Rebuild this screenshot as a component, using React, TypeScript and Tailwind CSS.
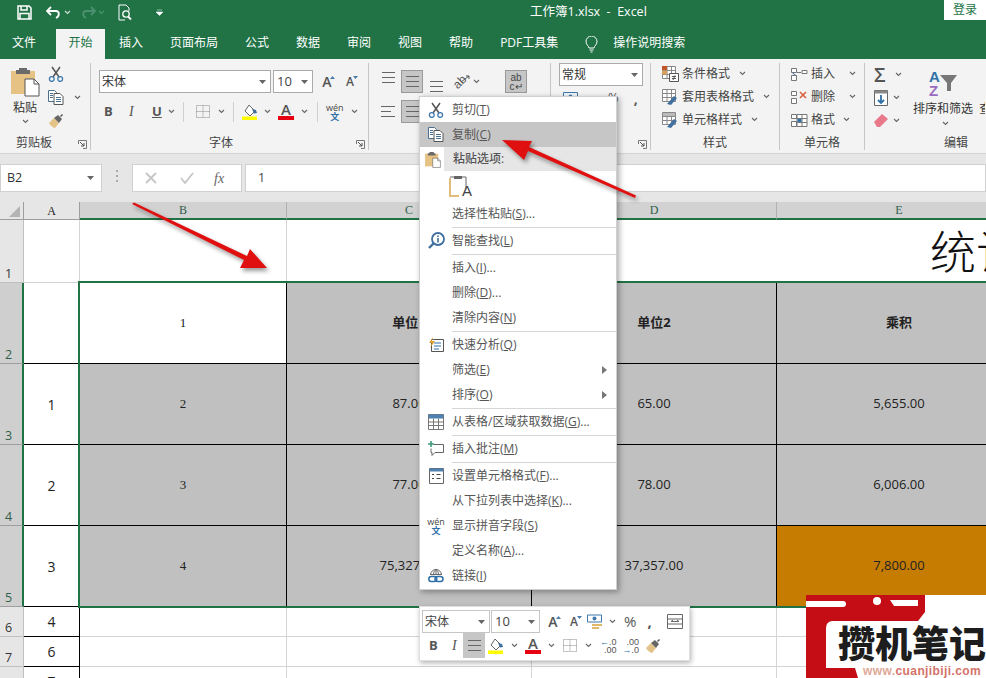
import type { ReactNode } from "react";

function Chev({ className = "", color = "#666" }: { className?: string; color?: string }) {
  return (
    <svg width="7" height="5" viewBox="0 0 7 5" className={`shrink-0 ${className}`}>
      <path d="M1 1l2.5 2.5L6 1" fill="none" stroke={color} strokeWidth="1.1" />
    </svg>
  );
}

function Caret() {
  return (
    <svg width="7" height="4" viewBox="0 0 7 4" className="shrink-0">
      <path d="M0 0h7L3.5 4z" fill="#666" />
    </svg>
  );
}

function Launcher() {
  return (
    <svg width="9" height="9" viewBox="0 0 9 9" className="absolute right-[3px] bottom-[1px]">
      <path d="M.5 4V.5H8.5V8.5H5" fill="none" stroke="#777" />
      <path d="M2 2l4 4M6 3v3H3" fill="none" stroke="#555" />
    </svg>
  );
}

function Lines({ kind = "center", className = "" }: { kind?: "center" | "left"; className?: string }) {
  return (
    <svg width="15" height="11" viewBox="0 0 15 11" className={className}>
      <path d={kind === "left" ? "M0 .5h14M0 5.5h10M0 10.5h14" : "M1 .5h13M1 5.5h13M1 10.5h13"} stroke="#666" fill="none" />
    </svg>
  );
}

function Scissors({ size = 16 }: { size?: number }) {
  return (
    <svg width={size} height={size} viewBox="0 0 16 16">
      <path d="M4 1l7 10M12 1L5 11" stroke="#555" strokeWidth="1.5" fill="none" />
      <circle cx="3.8" cy="13" r="2.4" fill="none" stroke="#3f78ac" strokeWidth="1.3" />
      <circle cx="12.2" cy="13" r="2.4" fill="none" stroke="#3f78ac" strokeWidth="1.3" />
    </svg>
  );
}

function CopyIcon() {
  return (
    <svg width="16" height="15" viewBox="0 0 16 15">
      <path d="M.5.5h6l2 2v9H.5z" fill="#fff" stroke="#4a6f8f" />
      <path d="M6 3.5h6l3 3v8H6z" fill="#fff" stroke="#555" />
      <path d="M2 3.5h3M2 5.5h3M2 7.5h3M8 7.5h5M8 9.5h5M8 11.5h5" stroke="#4a6f8f" />
    </svg>
  );
}

function PasteIcon({ large = false }: { large?: boolean }) {
  return (
    <svg width={large ? 29 : 16} height={large ? 31 : 17} viewBox="0 0 29 31">
      <path d="M0 5h24v23H0z" fill="#e6c285" />
      <path d="M8 2h8v2h3v4H5V4h3z" fill="#6b6b6b" />
      <path d="M14 13h9l5 5v12H14z" fill="#fff" stroke="#555" />
      <path d="M23 13v5h5" fill="none" stroke="#555" />
    </svg>
  );
}

function Brush({ size = 16 }: { size?: number }) {
  return (
    <svg width={size} height={size} viewBox="0 0 16 16">
      <path d="M1 10l5-5 5 5-4 5c-2-.4-5-2.6-6-5z" fill="#e4c389" />
      <path d="M6 5l4-3 4 4-3 4z" fill="#666" />
      <path d="M12 3l2-2 1 1-2 2z" fill="#555" />
    </svg>
  );
}

function DottedGrid() {
  return (
    <svg width="14" height="13" viewBox="0 0 14 13">
      <path d="M.5.5h13v12H.5zM7 .5v12M.5 6.5h13" fill="none" stroke="#888" strokeDasharray="1 1" />
    </svg>
  );
}

function Bucket() {
  return (
    <svg width="17" height="16" viewBox="0 0 17 16">
      <path d="M7 1l6 6-5 5-5-5z" fill="#fff" stroke="#666" />
      <path d="M10 5l4 1 1 3-3 .5z" fill="#3f6f9f" />
      <path d="M0 12.500h15V16H0z" fill="#ffff00" />
    </svg>
  );
}

function ColorA() {
  return (
    <span className="flex w-[16px] flex-col items-center leading-none">
      <span className="text-[15px] font-semibold leading-[12px] text-[#555]">A</span>
      <span className="mt-[1px] h-[4px] w-[16px] bg-[#e60012]" />
    </span>
  );
}

function Wen() {
  return (
    <span className="flex flex-col items-center text-[9px] leading-none">
      <span className="leading-[9px] text-[#444]">wén</span>
      <span className="font-semibold leading-[9px] text-[#2f70a8]">文</span>
    </span>
  );
}

function GrowA({ up = true }: { up?: boolean }) {
  return (
    <span className="relative flex w-[16px] justify-center">
      <span className={`${up ? "text-[14px]" : "text-[12px]"} font-semibold leading-[16px] text-[#555]`}>A</span>
      <svg width="5" height="3" viewBox="0 0 5 3" className="absolute right-0 top-[2px]">
        <path d={up ? "M0 3h5L2.500 0z" : "M0 0h5L2.500 3z"} fill="#4a7aa8" />
      </svg>
    </span>
  );
}

function TableIcon({ kind }: { kind: "cond" | "table" | "style" }) {
  return (
    <svg width="17" height="16" viewBox="0 0 17 16">
      <path d="M.5.500h13v12H.5zM.5 4.500h13M.5 8.500h13M5 .5v12M9.500.5v12" fill="#fff" stroke="#888" />
      {kind === "cond" && <path d="M0 0h5v4H0z" fill="#c0562a" />}
      {kind === "cond" && <path d="M0 4.500h5v4H0z" fill="#d8a05c" />}
      {kind === "cond" && <path d="M7.500 7.500h9v8h-9z" fill="#fff" stroke="#555" />}
      {kind === "cond" && <path d="M10 10.500h4M10 12.500h4M13 9.500l-2 4.500" stroke="#555" fill="none" />}
      {kind !== "cond" && <path d="M5 15l7-8 3 2-6 7z" fill="#40709f" />}
      {kind === "style" && <path d="M1 1h12v3H1z" fill="#bbb" />}
    </svg>
  );
}

function CellsIcon({ kind }: { kind: "ins" | "del" | "fmt" }) {
  return (
    <svg width="17" height="16" viewBox="0 0 17 16">
      <path d="M.5 2.500h5v4h-5zM.5 9.500h5v5h-5z" fill="#fff" stroke="#777" />
      {kind === "ins" && <path d="M6 6.500h4M11 4.500h5v3h-5z" fill="#fff" stroke="#777" />}
      {kind === "ins" && <path d="M1.500 7l3 2" stroke="#3f78ac" />}
      {kind === "del" && <path d="M9 3l6 6M15 3l-6 6" stroke="#d9603e" strokeWidth="1.6" />}
      {kind === "fmt" && <path d="M6 2.500h10v12H6zM11 2.500v12M6 6.500h10M6 10.500h10" fill="#fff" stroke="#777" />}
      {kind === "fmt" && <path d="M6.500 7h4v3h-4z" fill="#2f70a8" />}
    </svg>
  );
}

function Save() {
  return (
    <svg width="15" height="15" viewBox="0 0 15 15">
      <path d="M1 1h11l2 2v11H1z" fill="none" stroke="#fff" strokeWidth="1.500" />
      <path d="M4 1v4h6V1M3 14V8.500h9V14" fill="none" stroke="#fff" strokeWidth="1.500" />
    </svg>
  );
}

function Group({ width, label, labelClass = "", launcher, border = true, children }: { width: number; label: string; labelClass?: string; launcher?: boolean; border?: boolean; children: ReactNode }) {
  return (
    <div className={`relative flex h-full shrink-0 flex-col ${border ? "border-r border-[#c6c6c6]" : ""}`} style={{ width }}>
      <div className="relative flex-1 overflow-hidden">{children}</div>
      <div className={`relative flex h-[15px] items-center justify-center text-[12px] leading-none text-[#444] ${labelClass}`}>
        {label}
        {launcher && <Launcher />}
      </div>
    </div>
  );
}

function ListRow({ icon, text, chevGap = 6 }: { icon: ReactNode; text: string; chevGap?: number }) {
  return (
    <div className="flex h-[23px] items-center gap-[3px] text-[12px] text-[#444]">
      {icon}
      <span>{text}</span>
      <span style={{ marginLeft: chevGap }}>
        <Chev />
      </span>
    </div>
  );
}

function Ribbon() {
  return (
    <div className="flex h-[95px] shrink-0 border-b border-[#d4d4d4] bg-[#f3f3f3] pt-[4px] pb-[3px]">
      <Group width={91} label="剪贴板" labelClass="pr-[22px]" launcher>
        <div className="flex pl-[11px] pt-[3px]">
          <div className="flex w-[28px] flex-col items-center">
            <PasteIcon large />
            <span className="mt-[2px] whitespace-nowrap text-[12px] leading-[18px] text-[#333]">粘贴</span>
            <Chev className="mt-[2px]" />
          </div>
          <div className="ml-[9px] flex flex-col gap-[8px]">
            <Scissors />
            <div className="flex items-center gap-[10px]">
              <CopyIcon />
              <Chev />
            </div>
            <Brush />
          </div>
        </div>
      </Group>

      <Group width={278} label="字体" labelClass="pr-[17px]" launcher>
        <div className="flex flex-col gap-[7px] pl-[8px] pt-[7px]">
          <div className="flex h-[23px] items-center">
            <div className="flex h-[23px] w-[172px] items-center justify-between border border-[#ababab] bg-white px-[2px] pr-[4px] text-[12px] text-[#333]">
              宋体
              <Caret />
            </div>
            <div className="ml-[2px] flex h-[23px] w-[40px] items-center justify-between border border-[#ababab] bg-white px-[3px] pr-[4px] text-[13px] text-[#444]">
              10
              <Caret />
            </div>
            <div className="ml-[6px] flex gap-[7px]">
              <GrowA />
              <GrowA up={false} />
            </div>
          </div>
          <div className="flex h-[23px] items-center text-[#555]">
            <span className="w-[20px] pl-[5px] text-[13px] font-bold">B</span>
            <span className="ml-[5px] w-[18px] pl-[5px] font-['Liberation_Serif',serif] text-[14px] italic">I</span>
            <span className="ml-[6px] w-[18px] pl-[4px] text-[13px] font-bold underline">U</span>
            <Chev className="ml-[2px]" />
            <span className="ml-[8px] h-[20px] w-px bg-[#d0d0d0]" />
            <span className="ml-[12px]">
              <DottedGrid />
            </span>
            <Chev className="ml-[8px]" />
            <span className="ml-[8px] h-[20px] w-px bg-[#d0d0d0]" />
            <span className="ml-[8px]">
              <Bucket />
            </span>
            <Chev className="ml-[5px]" />
            <span className="ml-[7px]">
              <ColorA />
            </span>
            <Chev className="ml-[7px]" />
            <span className="ml-[9px] h-[20px] w-px bg-[#d0d0d0]" />
            <span className="ml-[8px]">
              <Wen />
            </span>
            <Chev className="ml-[7px]" />
          </div>
        </div>
      </Group>

      <Group width={182} label="" launcher>
        <div className="flex flex-col gap-[7px] pl-[6px] pt-[7px]">
          <div className="flex h-[23px] items-center">
            <span className="flex h-[23px] w-[26px] items-start justify-center pt-[2px]">
              <Lines />
            </span>
            <span className="flex h-[23px] w-[22px] items-center justify-center border border-[#999] bg-[#c6c6c6]">
              <Lines />
            </span>
            <span className="flex h-[23px] w-[26px] items-end justify-center pb-[1px]">
              <Lines />
            </span>
            <span className="relative flex w-[22px] justify-center">
              <span className="-rotate-45 font-['Liberation_Sans',sans-serif] text-[12px] leading-[14px] text-[#555]">ab</span>
              <svg width="10" height="8" viewBox="0 0 10 8" className="absolute right-0 top-0">
                <path d="M0 7L8 1M5 1h3v3" fill="none" stroke="#555" />
              </svg>
            </span>
            <Chev className="ml-[2px]" />
            <span className="ml-[25px] flex h-[23px] w-[22px] flex-col items-center justify-center border border-[#999] bg-[#c6c6c6] font-['Liberation_Sans',sans-serif] text-[10px] leading-[9px] text-[#444]">
              <span>ab</span>
              <span>c↵</span>
            </span>
          </div>
          <div className="flex h-[23px] items-center">
            <span className="flex h-[23px] w-[26px] items-center justify-center">
              <Lines kind="left" />
            </span>
            <span className="flex h-[23px] w-[22px] items-center justify-center border border-[#999] bg-[#c6c6c6]">
              <Lines />
            </span>
          </div>
        </div>
      </Group>

      <Group width={100} label="" launcher>
        <div className="flex flex-col gap-[4px] pl-[8px] pr-[8px]">
          <div className="flex h-[23px] w-[84px] items-center justify-between border border-[#ababab] bg-white px-[2px] pr-[4px] text-[12px] text-[#333]">
            常规
            <Caret />
          </div>
          <div className="flex h-[16px] items-center pl-[4px] text-[#555]">
            <svg width="15" height="12" viewBox="0 0 15 12">
              <path d="M.5.5h14v8H.5z" fill="#eef4fa" stroke="#3f78ac" />
              <circle cx="7.500" cy="4.500" r="2" fill="#3f78ac" />
              <path d="M3 10h10v2H3z" fill="#e0b868" />
            </svg>
            <span className="ml-[30px] text-[13px]">%</span>
            <span className="ml-[15px] text-[14px] font-bold">,</span>
          </div>
        </div>
      </Group>

      <Group width={129} label="样式">
        <div className="-mt-px pl-[11px]">
          <ListRow icon={<TableIcon kind="cond" />} text="条件格式" />
          <ListRow icon={<TableIcon kind="table" />} text="套用表格格式" />
          <ListRow icon={<TableIcon kind="style" />} text="单元格样式" />
        </div>
      </Group>

      <Group width={85} label="单元格">
        <div className="-mt-px pl-[11px]">
          <ListRow icon={<CellsIcon kind="ins" />} text="插入" chevGap={11} />
          <ListRow icon={<CellsIcon kind="del" />} text="删除" chevGap={11} />
          <ListRow icon={<CellsIcon kind="fmt" />} text="格式" chevGap={5} />
        </div>
      </Group>

      <Group width={120} label="编辑" labelClass="pl-[62px]" border={false}>
        <div className="flex pl-[9px]">
          <div className="flex w-[32px] flex-col">
            <div className="flex h-[23px] items-center gap-[5px]">
              <span className="w-[16px] text-[20px] font-semibold leading-[20px] text-[#555]">Σ</span>
              <Chev />
            </div>
            <div className="flex h-[23px] items-center gap-[4px]">
              <svg width="15" height="16" viewBox="0 0 15 16">
                <path d="M.5.500h13v15H.5z" fill="#fff" stroke="#666" />
                <path d="M.5.500h13v3H.5z" fill="#888" />
                <path d="M7 5v8M4 10l3 3 3-3" stroke="#2f70a8" strokeWidth="1.800" fill="none" />
              </svg>
              <Chev />
            </div>
            <div className="flex h-[23px] items-center gap-[5px]">
              <svg width="14" height="13" viewBox="0 0 14 13">
                <path d="M0 8l8-8 6 5-8 8H3z" fill="#e8788a" />
              </svg>
              <Chev />
            </div>
          </div>
          <div className="ml-[7px] flex w-[70px] flex-col items-start">
            <div className="ml-[16px] flex h-[35px] items-end">
              <span className="flex flex-col font-['Liberation_Sans',sans-serif] text-[15px] font-bold leading-[14px]">
                <span className="text-[#2f70a8]">A</span>
                <span className="text-[#9a6cc0]">Z</span>
              </span>
              <svg width="17" height="17" viewBox="0 0 17 17" className="mb-[6px]">
                <path d="M0 0h17l-6 8v8H7V8z" fill="#777" />
              </svg>
            </div>
            <span className="mt-[2px] whitespace-nowrap text-[12px] leading-[18px] text-[#333]">排序和筛选&nbsp;&nbsp;查</span>
            <Chev className="ml-[29px] mt-[3px]" />
          </div>
        </div>
      </Group>
    </div>
  );
}

function FormulaBar() {
  return (
    <div className="flex h-[48px] shrink-0 items-start bg-[#e6e6e6] pt-[10px]">
      <div className="flex h-[28px] w-[102px] items-center justify-between border border-[#d0d0d0] bg-white pl-[6px] pr-[7px] text-[12.500px] text-[#333]">
        B2
        <Caret />
      </div>
      <span className="ml-[14px] mt-[6px] flex w-[2px] flex-col gap-[3px]">
        <i className="h-[2px] w-[2px] bg-[#aaa]" />
        <i className="h-[2px] w-[2px] bg-[#aaa]" />
        <i className="h-[2px] w-[2px] bg-[#aaa]" />
      </span>
      <div className="ml-[14px] flex h-[28px] w-[110px] items-center border border-[#d0d0d0] bg-white pl-[12px]">
        <svg width="12" height="12" viewBox="0 0 12 12">
          <path d="M1 1l10 10M11 1L1 11" stroke="#c6c6c6" strokeWidth="1.800" />
        </svg>
        <svg width="14" height="12" viewBox="0 0 14 12" className="ml-[23px]">
          <path d="M1 6l4 5 8-10" stroke="#c6c6c6" strokeWidth="1.800" fill="none" />
        </svg>
        <span className="ml-[20px] font-['Liberation_Serif',serif] text-[14px] italic text-[#666]">fx</span>
      </div>
      <div className="ml-[3px] flex h-[28px] flex-1 items-center border border-[#d0d0d0] bg-white pl-[12px] text-[12.500px] text-[#444]">
        1
      </div>
    </div>
  );
}

const cols = ["B", "C", "D", "E"];

function Cell({ className = "", children }: { className?: string; children?: ReactNode }) {
  return <div className={`flex min-w-0 items-center justify-center overflow-hidden text-[13px] text-[#222] ${className}`}>{children}</div>;
}

function RowHead({ n, active = false }: { n: string | number; active?: boolean }) {
  return (
    <div className={`flex items-end pb-[1px] pl-[5px] text-[12.500px] leading-[15px] ${active ? "border-r-2 border-b border-r-[#217346] border-b-[#9e9e9e] bg-[#cfcfcf] text-[#2f5f4a]" : "border-r border-b border-[#c0c0c0] bg-[#e6e6e6] text-[#333]"}`}>
      {n}
    </div>
  );
}

const dataRows = [
  { head: 3, a: "1", b: "2", c: "87.00", d: "65.00", e: "5,655.00" },
  { head: 4, a: "2", b: "3", c: "77.00", d: "78.00", e: "6,006.00" },
  { head: 5, a: "3", b: "4", c: "75,327.00", d: "37,357.00", e: "7,800.00" },
];

const serifNum = "font-['Liberation_Serif',serif] text-[10px]";
const blackCell = "border-r border-b border-black";
const plain = "border-r border-b border-[#d4d4d4] bg-white";
const colA = "border-r border-b border-black bg-white text-[14px]";

function Sheet() {
  return (
    <div className="relative flex-1 overflow-hidden bg-white">
      <div className="grid grid-cols-[24px_56px_207px_245px_245px_245px] grid-rows-[18px_63px_81px_81px_81px_81px_30px_30px_30px]">
        <div className="flex items-end justify-end border-r border-b border-[#9e9e9e] bg-[#e6e6e6] pb-[2px] pr-[3px]">
          <svg width="11" height="11" viewBox="0 0 11 11">
            <path d="M11 0v11H0z" fill="#b4b4b4" />
          </svg>
        </div>
        <div className="flex items-center justify-center border-r border-b border-[#9e9e9e] bg-[#e6e6e6] font-['Liberation_Serif',serif] text-[12px] text-[#222]">A</div>
        {cols.map((c) => (
          <div key={c} className="flex items-center justify-center border-r border-b-2 border-r-[#b0b0b0] border-b-[#217346] bg-[#d2d2d2] font-['Liberation_Serif',serif] text-[12px] text-[#2f5f4a]">
            {c}
          </div>
        ))}

        <RowHead n={1} />
        <Cell className={plain} />
        <Cell className={plain} />
        <div className="col-span-3 flex items-center overflow-hidden border-b border-[#d4d4d4] bg-white pl-[643px]">
          <span className="whitespace-nowrap text-[46px] font-light leading-none text-[#111]">统计</span>
        </div>

        <RowHead n={2} active />
        <Cell className={`${blackCell} bg-white`} />
        <Cell className={`${blackCell} bg-white ${serifNum}`}>1</Cell>
        <Cell className={`${blackCell} bg-[#c0c0c0] font-bold`}>单位1</Cell>
        <Cell className={`${blackCell} bg-[#c0c0c0] font-bold`}>单位2</Cell>
        <Cell className={`${blackCell} bg-[#c0c0c0] font-bold`}>乘积</Cell>

        {dataRows.map((r) => (
          <div key={r.head} className="contents">
            <RowHead n={r.head} active />
            <Cell className={colA}>{r.a}</Cell>
            <Cell className={`${blackCell} bg-[#c0c0c0] ${serifNum}`}>{r.b}</Cell>
            <Cell className={`${blackCell} bg-[#c0c0c0]`}>{r.c}</Cell>
            <Cell className={`${blackCell} bg-[#c0c0c0]`}>{r.d}</Cell>
            <Cell className={`${blackCell} ${r.head === 5 ? "bg-[#c67c00]" : "bg-[#c0c0c0]"}`}>{r.e}</Cell>
          </div>
        ))}

        {[
          ["6", "4"],
          ["7", "6"],
          ["", "7"],
        ].map(([head, a]) => (
          <div key={a} className="contents">
            <RowHead n={head} />
            <Cell className={colA}>{a}</Cell>
            <Cell className={plain} />
            <Cell className={plain} />
            <Cell className={plain} />
            <Cell className={plain} />
          </div>
        ))}
      </div>
      {/* selection outline */}
      <div className="pointer-events-none absolute left-[78px] top-[79px] h-[327px] w-[960px] border-2 border-[#217346]" />
    </div>
  );
}

type MenuEntry = {
  label?: string;
  mn?: string;
  tail?: string;
  icon?: ReactNode;
  active?: boolean;
  arrow?: boolean;
  sep?: boolean;
};

function SearchInfo() {
  return (
    <svg width="17" height="17" viewBox="0 0 17 17">
      <circle cx="10" cy="7" r="6" fill="none" stroke="#3f6f9f" strokeWidth="1.800" />
      <path d="M5.500 11.500L1 16" stroke="#3f6f9f" strokeWidth="2.400" />
      <path d="M10 3.500v1.500M10 6v4.500" stroke="#3f6f9f" strokeWidth="1.600" />
    </svg>
  );
}

function QuickIcon() {
  return (
    <svg width="16" height="15" viewBox="0 0 16 15">
      <path d="M3.500 2.500h12v12h-12z" fill="#fff" stroke="#555" />
      <path d="M6 6h7M6 9h7M6 12h5" stroke="#2f70a8" />
      <path d="M5 0L1 6h3l-2 5 5-7H4z" fill="#e0a030" />
    </svg>
  );
}

function GridIcon() {
  return (
    <svg width="16" height="16" viewBox="0 0 16 16">
      <path d="M.5.500h15v15H.5z" fill="#fff" stroke="#777" />
      <path d="M.5.500h15v4H.5z" fill="#4f81b0" />
      <path d="M.5 8h15M.5 11.500h15M5.500 4.500v11M10.500 4.500v11" stroke="#777" fill="none" />
    </svg>
  );
}

function CommentIcon() {
  return (
    <svg width="16" height="16" viewBox="0 0 16 16">
      <path d="M5.500 3.500h10v8H7l-3 3v-3H3v-4" fill="#fff" stroke="#666" />
      <path d="M3 0v6M0 3h6" stroke="#3f9a78" strokeWidth="1.600" />
    </svg>
  );
}

function FormatIcon() {
  return (
    <svg width="15" height="16" viewBox="0 0 15 16">
      <path d="M.5.500h14v15H.5z" fill="#fff" stroke="#666" />
      <path d="M.5.500h14v3H.5z" fill="#4f81b0" />
      <path d="M3 6.500h2M3 10.500h2M7.500 6.500h4M7.500 10.500h4" stroke="#444" />
    </svg>
  );
}

function LinkIcon() {
  return (
    <svg width="16" height="16" viewBox="0 0 16 16">
      <path d="M2.500 7a5.500 5.500 0 0 1 11 0M2.500 6.500h11M8 1.500v5M5.500 6.500c0-2 1-4 2.500-5 1.500 1 2.500 3 2.500 5" fill="none" stroke="#666" />
      <rect x=".8" y="8.500" width="8" height="5" rx="2.500" fill="none" stroke="#2f70a8" strokeWidth="1.500" />
      <rect x="7" y="8.500" width="8" height="5" rx="2.500" fill="none" stroke="#2f70a8" strokeWidth="1.500" />
    </svg>
  );
}

const menuTop: MenuEntry[] = [
  { label: "剪切", mn: "T", icon: <Scissors /> },
  { label: "复制", mn: "C", icon: <CopyIcon />, active: true },
];

const menuBottom: MenuEntry[] = [
  { label: "选择性粘贴", mn: "S", tail: "..." },
  { sep: true },
  { label: "智能查找", mn: "L", icon: <SearchInfo /> },
  { sep: true },
  { label: "插入", mn: "I", tail: "..." },
  { label: "删除", mn: "D", tail: "..." },
  { label: "清除内容", mn: "N" },
  { sep: true },
  { label: "快速分析", mn: "Q", icon: <QuickIcon /> },
  { label: "筛选", mn: "E", arrow: true },
  { label: "排序", mn: "O", arrow: true },
  { sep: true },
  { label: "从表格/区域获取数据", mn: "G", tail: "...", icon: <GridIcon /> },
  { sep: true },
  { label: "插入批注", mn: "M", icon: <CommentIcon /> },
  { sep: true },
  { label: "设置单元格格式", mn: "F", tail: "...", icon: <FormatIcon /> },
  { label: "从下拉列表中选择", mn: "K", tail: "..." },
  { label: "显示拼音字段", mn: "S", icon: <Wen /> },
  { label: "定义名称", mn: "A", tail: "..." },
  { label: "链接", mn: "I", icon: <LinkIcon /> },
];

function MenuRow({ item }: { item: MenuEntry }) {
  if (item.sep) {
    return (
      <div className="flex h-[2px] items-center pl-[32px]">
        <div className="h-px flex-1 bg-[#d6d6d6]" />
      </div>
    );
  }
  return (
    <div className={`relative flex h-[25px] items-center text-[12px] text-[#555] ${item.active ? "bg-[#c6c6c6] text-[#333]" : ""}`}>
      <span className="flex w-[32px] shrink-0 items-center justify-center">{item.icon}</span>
      <span className="whitespace-nowrap">
        {item.label}(<u>{item.mn}</u>){item.tail}
      </span>
      {item.arrow && (
        <svg width="5" height="8" viewBox="0 0 5 8" className="absolute right-[9px]">
          <path d="M0 0l5 4-5 4z" fill="#777" />
        </svg>
      )}
    </div>
  );
}

function ContextMenu() {
  return (
    <div className="absolute left-[419px] top-[96px] w-[198px] border border-[#d0d0d0] bg-white pb-px shadow-[2px_2px_6px_rgba(0,0,0,0.35)]">
      {menuTop.map((m) => (
        <MenuRow key={m.label} item={m} />
      ))}
      <div className="flex h-[24px] items-center">
        <span className="flex w-[24px] shrink-0 justify-center pl-[2px]">
          <PasteIcon />
        </span>
        <span className="flex h-full flex-1 items-center bg-[#e6e6e6] pl-[9px] text-[12px] font-medium text-[#555]">粘贴选项:</span>
      </div>
      <div className="flex h-[30px] items-center pl-[29px]">
        <svg width="22" height="24" viewBox="0 0 22 24">
          <path d="M1 4v18h9" fill="none" stroke="#e0bd7e" strokeWidth="2" />
          <path d="M1 3h16v12" fill="none" stroke="#666" />
          <path d="M5 2h8v3H5z" fill="#666" />
        </svg>
        <span className="-ml-[9px] mt-[9px] font-['Liberation_Sans',sans-serif] text-[15px] leading-none text-[#444]">A</span>
      </div>
      {menuBottom.map((m, i) => (
        <MenuRow key={i} item={m} />
      ))}
    </div>
  );
}

function MiniToolbar() {
  return (
    <div className="absolute left-[419px] top-[606px] flex h-[55px] w-[271px] flex-col border border-[#e0e0e0] bg-white pt-[3px] shadow-[1px_2px_5px_rgba(0,0,0,0.3)]">
      <div className="flex h-[23px] items-center pl-[2px] text-[#555]">
        <div className="flex h-[23px] w-[68px] items-center justify-between border border-[#c6c6c6] px-[2px] pr-[4px] text-[12px] text-[#444]">
          宋体
          <Caret />
        </div>
        <div className="ml-px flex h-[23px] w-[49px] items-center justify-between border border-[#c6c6c6] px-[3px] pr-[4px] text-[13px] text-[#444]">
          10
          <Caret />
        </div>
        <span className="ml-[5px]">
          <GrowA />
        </span>
        <span className="ml-[5px]">
          <GrowA up={false} />
        </span>
        <svg width="17" height="16" viewBox="0 0 17 16" className="ml-[5px]">
          <path d="M.5 1h14v7H.5z" fill="#fff" stroke="#3f78ac" />
          <circle cx="7.500" cy="4.500" r="2" fill="#3f78ac" />
          <path d="M5 10h10v2H5zM5 13h7v2H5z" fill="#e0b868" />
        </svg>
        <Chev className="ml-[5px]" />
        <span className="ml-[8px] text-[15px] leading-none">%</span>
        <span className="ml-[11px] text-[15px] font-bold leading-none">,</span>
        <svg width="16" height="15" viewBox="0 0 16 15" className="ml-[15px]">
          <path d="M.5.500h15v14H.5zM.5 5h15M.5 10h15M4 7.500h8M4 7.500l2-1.500M12 7.500l-2-1.500" fill="none" stroke="#666" />
        </svg>
      </div>
      <div className="flex h-[25px] items-center text-[#555]">
        <span className="ml-[9px] w-[10px] text-[13px] font-bold">B</span>
        <span className="ml-[13px] w-[8px] font-['Liberation_Serif',serif] text-[14px] italic">I</span>
        <span className="ml-[3px] flex h-[25px] w-[22px] items-center justify-center bg-[#c6c6c6]">
          <Lines />
        </span>
        <span className="ml-[3px]">
          <Bucket />
        </span>
        <Chev className="ml-[6px]" />
        <span className="ml-[7px]">
          <ColorA />
        </span>
        <Chev className="ml-[7px]" />
        <span className="ml-[8px]">
          <DottedGrid />
        </span>
        <Chev className="ml-[8px]" />
        <span className="ml-[8px] flex flex-col items-end font-['Liberation_Sans',sans-serif] text-[9px] leading-[8px] text-[#555]">
          <span>
            <b className="text-[#2f70a8]">←</b>.0
          </span>
          <span>.00</span>
        </span>
        <span className="ml-[6px] flex flex-col items-end font-['Liberation_Sans',sans-serif] text-[9px] leading-[8px] text-[#555]">
          <span>.00</span>
          <span>
            <b className="text-[#2f70a8]">→</b>.0
          </span>
        </span>
        <span className="ml-[6px]">
          <Brush />
        </span>
      </div>
    </div>
  );
}

function Arrows() {
  return (
    <svg width="986" height="678" viewBox="0 0 986 678" className="pointer-events-none absolute left-0 top-0" style={{ filter: "drop-shadow(2px 3px 2px rgba(0,0,0,0.4))" }}>
      <path d="M132 204L134 202.500L247 256L250 249L267 268L240 268L244 260z" fill="#e01010" />
      <path d="M636 195.500L635 198L528 151L524 160L502 140L532 141L529 147z" fill="#e01010" />
    </svg>
  );
}

function Watermark() {
  return (
    <div className="absolute left-[806px] top-[595px] h-[83px] w-[180px] overflow-hidden bg-white">
      <svg width="180" height="83" viewBox="0 0 180 83" className="absolute left-0 top-0">
        <path d="M0 0H119V17L112 26H26Q20 27 20 33V73H49L52 83H0Z" fill="#c40d14" />
        <path d="M0 6H37a3 3 0 0 1 0 6H0zM84 5h28v6H88z" fill="#fff" />
        <circle cx="71" cy="6" r="4" fill="#fff" />
      </svg>
      <div className="absolute left-[32px] top-[31px] whitespace-nowrap text-[37px] font-black leading-[36px] text-[#1d1d1d]">攒机笔记</div>
      <div className="absolute left-[57px] top-[70px] whitespace-nowrap font-['Liberation_Sans',sans-serif] text-[12px] font-bold leading-[13px] tracking-[0.4px] text-[#e0a896]">
        www.<span className="text-[#d4736a]">cuanjibiji.com</span>
      </div>
    </div>
  );
}

export default function App() {
  return (
    <div className="relative flex h-[678px] w-[986px] flex-col overflow-hidden bg-white font-['Open_Sans','Noto_Sans_CJK_SC',sans-serif]">
      <div className="flex h-[29px] shrink-0 items-center bg-[#217346] pb-[4px] pl-[17px] text-white">
        <Save />
        <svg width="16" height="13" viewBox="0 0 16 13" className="ml-[14px]">
          <path d="M5 1L1 5l4 4M1 5h9c3.500 0 4 5 0 7" fill="none" stroke="#fff" strokeWidth="1.800" />
        </svg>
        <Chev className="ml-[2px]" color="#cfe3d8" />
        <svg width="16" height="13" viewBox="0 0 16 13" className="ml-[9px]">
          <path d="M11 1l4 4-4 4M15 5H6c-3.500 0-4 5 0 7" fill="none" stroke="#4c9270" strokeWidth="1.800" />
        </svg>
        <Chev className="ml-[2px]" color="#4c9270" />
        <svg width="15" height="17" viewBox="0 0 15 17" className="ml-[13px]">
          <path d="M1 1h7l3 3v3M1 1v15h6" fill="none" stroke="#fff" />
          <circle cx="8" cy="10" r="3.200" fill="none" stroke="#fff" strokeWidth="1.300" />
          <path d="M10 12.500l3 3" stroke="#fff" strokeWidth="1.800" />
        </svg>
        <svg width="7" height="7" viewBox="0 0 7 7" className="ml-[23px]">
          <path d="M1 1h5M0 3h7L3.500 6.500z" fill="#fff" stroke="#fff" strokeWidth=".5" />
        </svg>
        <span className="ml-[367px] whitespace-nowrap text-[12.500px] text-white">工作簿1.xlsx&nbsp;&nbsp;-&nbsp;&nbsp;Excel</span>
        <span className="ml-auto flex h-[20px] w-[42px] items-center justify-center self-start bg-white text-[12px] text-[#217346]">登录</span>
      </div>

      <div className="flex h-[30px] shrink-0 items-end gap-px bg-[#217346] text-[12px] text-white">
        <span className="flex h-[30px] items-center pb-[3px] pl-[12px] pr-[12px]">文件</span>
        <span className="ml-[7px] flex h-[30px] w-[49px] items-center justify-center bg-[#f3f3f3] pb-[3px] text-[#217346]">开始</span>
        {["插入", "页面布局", "公式", "数据", "审阅", "视图", "帮助", "PDF工具集"].map((t) => (
          <span key={t} className="flex h-[30px] items-center px-[13px] pb-[3px]">
            {t}
          </span>
        ))}
        <svg width="13" height="17" viewBox="0 0 13 17" className="ml-[13px] mb-[6px]">
          <path d="M4 12c0-2-3-3-3-6.500a5.500 5.500 0 0 1 11 0C12 9 9 10 9 12zM4.500 14h4M5.500 16h2" fill="none" stroke="#fff" />
        </svg>
        <span className="ml-[14px] flex h-[30px] items-center pb-[3px]">操作说明搜索</span>
      </div>

      <Ribbon />
      <FormulaBar />
      <Sheet />

      <ContextMenu />
      <MiniToolbar />
      <Watermark />
      <Arrows />
    </div>
  );
}
